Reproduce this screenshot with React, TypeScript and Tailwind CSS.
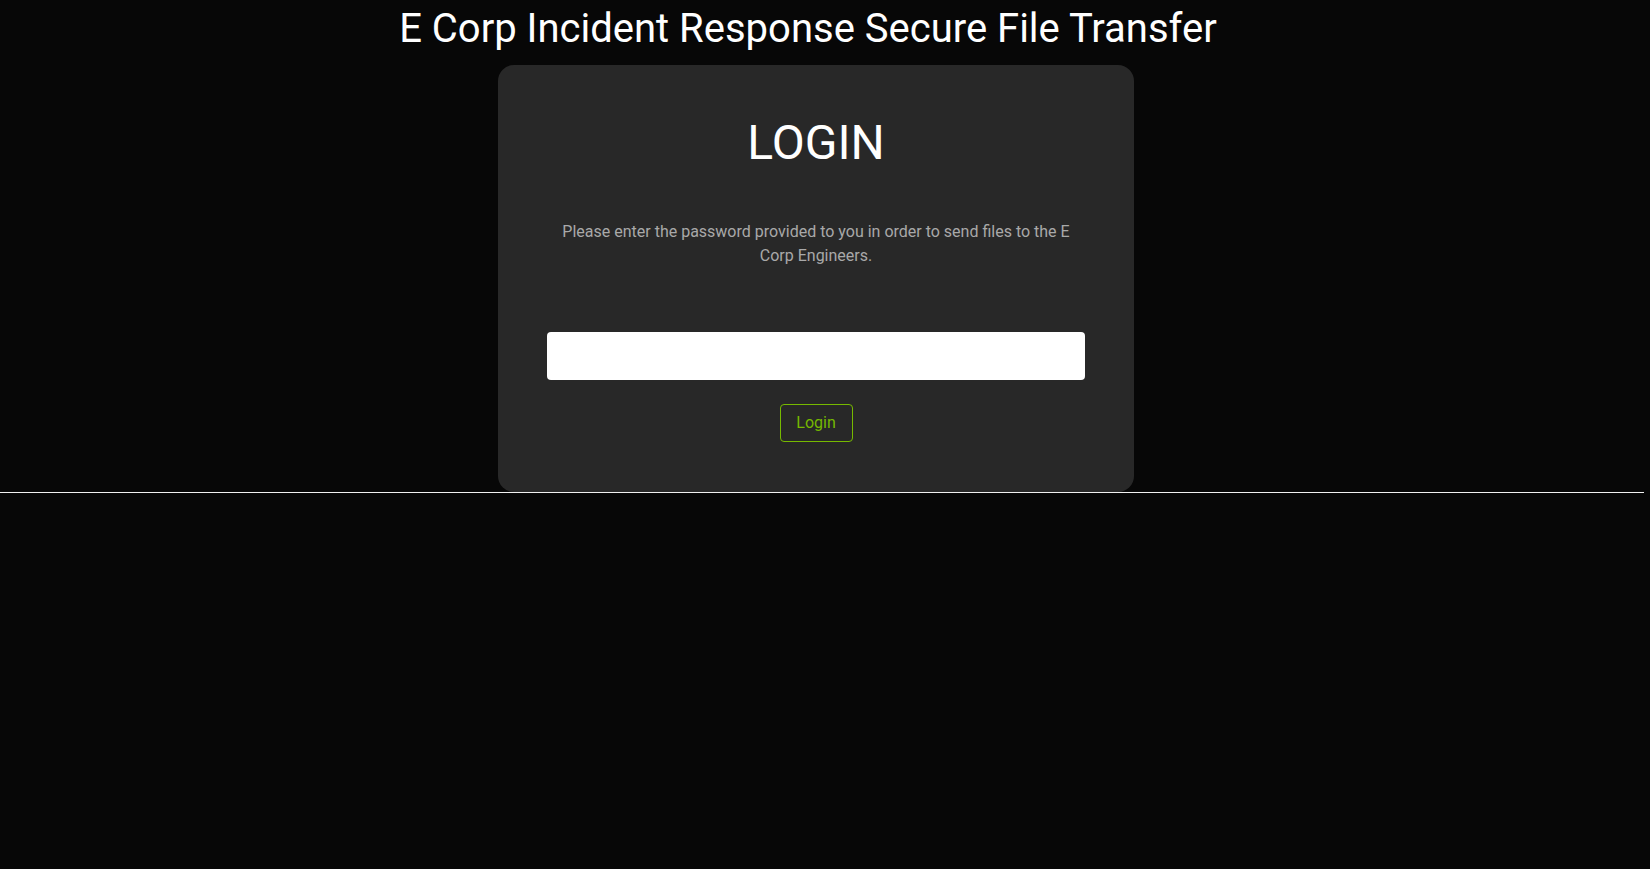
export default function App() {
  return (
    <div className="min-h-screen bg-[#070707] font-['Roboto',sans-serif]">
      <div className="w-[1644px]">
        <h1 className="pt-[5px] pr-[28px] text-center text-[40px] leading-[48px] font-normal text-white">
          E Corp Incident Response Secure File Transfer
        </h1>
        <div className="ml-[498px] mt-[12px] flex w-[636px] flex-col items-center rounded-2xl bg-[#282828] px-[49px] pt-[50px] pb-[50px]">
          <h2 className="text-[48px] leading-[56px] font-normal text-white">LOGIN</h2>
          <p className="mt-[49px] w-[538px] text-center text-base leading-6 text-[#a9a9a9]">
            Please enter the password provided to you in order to send files to the E Corp Engineers.
          </p>
          <input
            type="password"
            className="mt-[64px] h-[48px] w-[538px] rounded bg-white px-3 text-black outline-none"
          />
          <button className="mt-[24px] h-[38px] w-[73px] rounded border border-[#76b900] text-base text-[#76b900]">
            Login
          </button>
        </div>
        <hr className="h-px border-0 bg-[#f0f0f0]" />
      </div>
    </div>
  )
}
